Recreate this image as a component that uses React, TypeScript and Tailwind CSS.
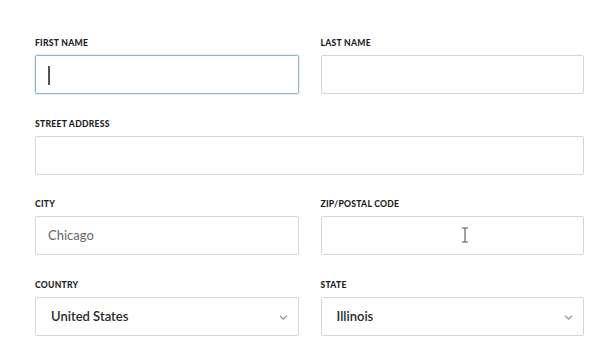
import React from "react";

const Label = ({ children }: { children: React.ReactNode }) => (
  <div className="h-[12px] mb-[6px] text-[8.6px] leading-[12px] font-black tracking-[0.03em] text-[#1e1e1e] uppercase" style={{ fontFamily: "Lato, 'Open Sans', sans-serif" }}>
    {children}
  </div>
);

const Chevron = () => (
  <svg width="9" height="5" viewBox="0 0 9 5" className="absolute right-[10px] top-[17px]">
    <path d="M1 0.8 L4.5 4 L8 0.8" fill="none" stroke="#9a9a9a" strokeWidth="1.3" />
  </svg>
);

export default function App() {
  return (
    <div className="w-[600px] h-[339px] bg-white overflow-hidden" style={{ fontFamily: "Lato, 'Open Sans', sans-serif" }}>
      <div className="pt-[37px] pl-[35px] w-[584px] grid grid-cols-2 gap-x-[22px] gap-y-[23.7px]">
        <div>
          <Label>First Name</Label>
          <div className="relative h-[39px] border border-[#8fb6cf] rounded-[2px] shadow-[0_0_0_1px_rgba(143,182,207,0.25)]">
            <div className="absolute left-[12px] top-[10px] w-[1.5px] h-[19px] bg-[#555]" />
          </div>
        </div>
        <div>
          <Label>Last Name</Label>
          <div className="h-[39px] border border-[#d6d6d6] rounded-[2px]" />
        </div>
        <div className="col-span-2">
          <Label>Street Address</Label>
          <div className="h-[39px] border border-[#d6d6d6] rounded-[2px]" />
        </div>
        <div>
          <Label>City</Label>
          <div className="h-[39px] border border-[#d6d6d6] rounded-[2px] flex items-center pl-[12px] text-[13px] text-[#666]">
            Chicago
          </div>
        </div>
        <div>
          <Label>Zip/Postal Code</Label>
          <div className="relative h-[39px] border border-[#d6d6d6] rounded-[2px]">
            <svg width="8" height="16" viewBox="0 0 8 16" className="absolute left-[139px] top-[10px]">
              <path d="M1 1 H7 M4 1 V15 M1 15 H7" fill="none" stroke="#555" strokeWidth="1.1" />
            </svg>
          </div>
        </div>
        <div>
          <Label>Country</Label>
          <div className="relative h-[39px] border border-[#d6d6d6] rounded-[2px] flex items-center pl-[15px] text-[13px] font-semibold text-[#2a2a2a]">
            United States
            <Chevron />
          </div>
        </div>
        <div>
          <Label>State</Label>
          <div className="relative h-[39px] border border-[#d6d6d6] rounded-[2px] flex items-center pl-[15px] text-[13px] font-semibold text-[#2a2a2a]">
            Illinois
            <Chevron />
          </div>
        </div>
      </div>
    </div>
  );
}
